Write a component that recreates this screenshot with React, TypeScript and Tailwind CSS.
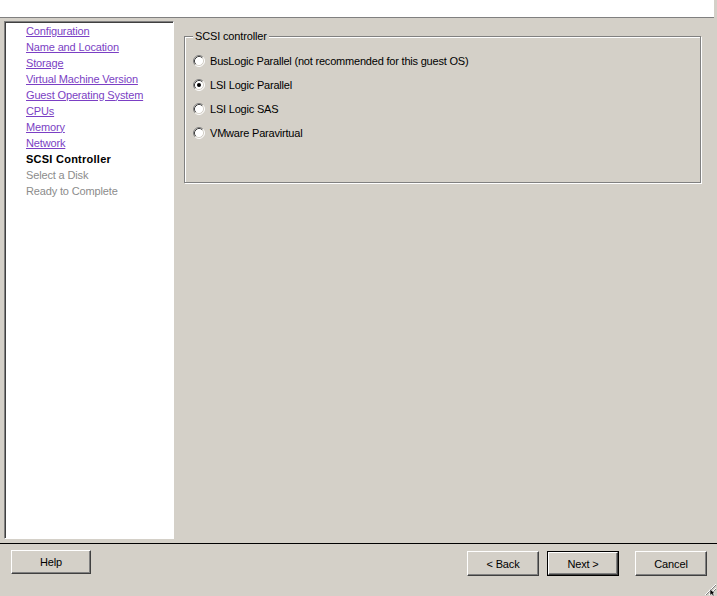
import React from "react";

const Radio = ({ checked }: { checked?: boolean }) => (
  <svg width="12" height="12" viewBox="0 0 12 12" className="shrink-0">
    <circle cx="6" cy="6" r="5" fill="#ffffff" />
    <path d="M 2.11 9.89 A 5.5 5.5 0 0 1 9.89 2.11" fill="none" stroke="#808080" strokeWidth="1" />
    <path d="M 9.89 2.11 A 5.5 5.5 0 0 1 2.11 9.89" fill="none" stroke="#ffffff" strokeWidth="1" />
    <path d="M 2.82 9.18 A 4.5 4.5 0 0 1 9.18 2.82" fill="none" stroke="#404040" strokeWidth="1" />
    <path d="M 9.18 2.82 A 4.5 4.5 0 0 1 2.82 9.18" fill="none" stroke="#d4d0c8" strokeWidth="1" />
    {checked && <circle cx="6" cy="6" r="2" fill="#000000" />}
  </svg>
);

const navLinks = [
  "Configuration",
  "Name and Location",
  "Storage",
  "Virtual Machine Version",
  "Guest Operating System",
  "CPUs",
  "Memory",
  "Network",
];

const options = [
  { label: "BusLogic Parallel (not recommended for this guest OS)", checked: false },
  { label: "LSI Logic Parallel", checked: true },
  { label: "LSI Logic SAS", checked: false },
  { label: "VMware Paravirtual", checked: false },
];

const btn =
  "flex items-center justify-center text-[11px] text-black border border-t-white border-l-white border-b-[#404040] border-r-[#404040] shadow-[inset_-1px_-1px_0_#808080] bg-[#d4d0c8]";

export default function App() {
  return (
    <div
      className="relative w-[717px] h-[596px] overflow-hidden bg-[#d4d0c8] text-[11px] leading-none tracking-[-0.15px]"
      style={{ fontFamily: '"Liberation Sans", Arial, sans-serif' }}
    >
      {/* header */}
      <div className="w-[714px] h-[18px] bg-white border-b border-[#808080]" />

      {/* body */}
      <div className="flex h-[525px]">
        <div className="ml-[4px] mt-[3px] w-[170px] h-[518px] bg-white border-t border-l border-[#808080] border-b border-r border-b-white border-r-white shadow-[inset_1px_1px_0_#404040] pl-[21px] pt-[1px]">
          {navLinks.map((l) => (
            <div key={l} className="h-[16px] flex items-center">
              <span className="underline text-[#7b3fc4] underline-offset-[1px]">{l}</span>
            </div>
          ))}
          <div className="h-[16px] flex items-center font-bold text-black tracking-[0.25px]">SCSI Controller</div>
          <div className="h-[16px] flex items-center text-[#8c8c8c]">Select a Disk</div>
          <div className="h-[16px] flex items-center text-[#8c8c8c]">Ready to Complete</div>
        </div>

        <div className="ml-[10px] mt-[18px]">
          <div className="relative w-[517px] h-[147px] border border-[#808080] shadow-[1px_1px_0_#fff,inset_1px_1px_0_#fff] pl-[8px] pt-[12px]">
            <span className="absolute left-[8px] top-[-6px] px-[2px] bg-[#d4d0c8] leading-[11px]">SCSI controller</span>
            {options.map((o) => (
              <div key={o.label} className="h-[24px] flex items-center gap-[5px]">
                <Radio checked={o.checked} />
                <span className="tracking-[-0.2px]">{o.label}</span>
              </div>
            ))}
          </div>
        </div>
      </div>

      {/* separator */}
      <div className="h-[1px] bg-black" />

      {/* footer */}
      <div className="flex justify-between pl-[11px] pr-[10px] pt-[6px]">
        <div className={`${btn} w-[80px] h-[24px]`}>Help</div>
        <div className="flex pt-[1px]">
          <div className={`${btn} w-[72px] h-[25px] pt-[1px]`}>&lt; Back</div>
          <div className="ml-[8px] w-[72px] h-[25px] border border-black">
            <div className="w-full h-full flex items-center justify-center pt-[1px] text-[11px] text-black border border-t-white border-l-white border-b-[#404040] border-r-[#404040] shadow-[inset_-1px_-1px_0_#808080]">
              Next &gt;
            </div>
          </div>
          <div className={`${btn} ml-[16px] w-[72px] h-[25px] pt-[1px]`}>Cancel</div>
        </div>
      </div>

      {/* resize grip + cursor */}
      <svg className="absolute right-0 bottom-0" width="14" height="14" viewBox="0 0 14 14">
        <line x1="2" y1="13" x2="13" y2="2" stroke="#ffffff" />
        <line x1="3" y1="13" x2="13" y2="3" stroke="#808080" />
        <line x1="6" y1="13" x2="13" y2="6" stroke="#ffffff" />
        <line x1="7" y1="13" x2="13" y2="7" stroke="#808080" />
        <path d="M7 7 L7 13.5 L8.6 12 L10 14 L11.3 13.4 L10 11.4 L12 11.4 Z" fill="#000" stroke="#fff" strokeWidth="0.6" />
      </svg>
    </div>
  );
}
